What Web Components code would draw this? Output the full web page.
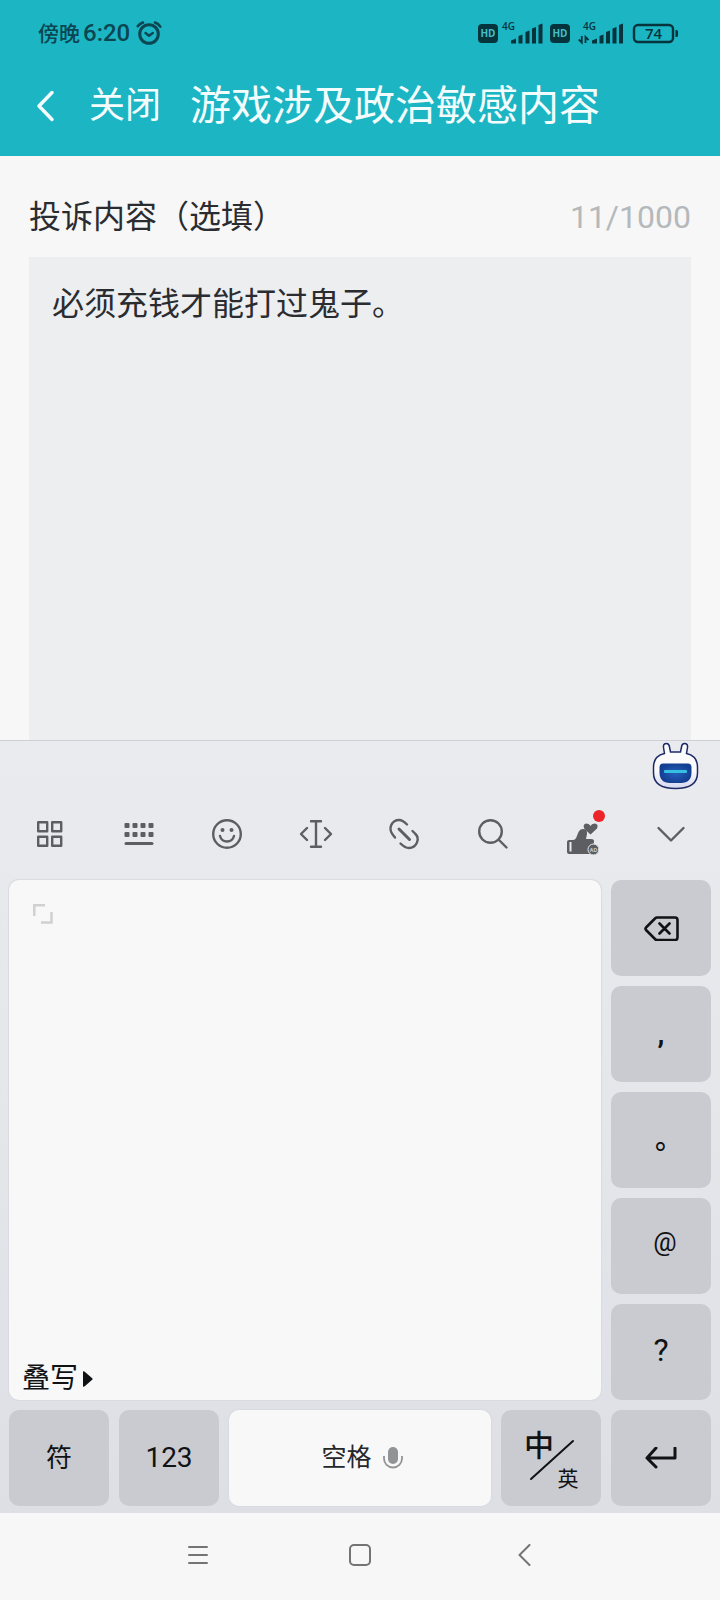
<!DOCTYPE html>
<html lang="zh-CN">
<head>
<meta charset="utf-8">
<meta name="viewport" content="width=device-width, initial-scale=1">
<title>游戏涉及政治敏感内容</title>
<style>
  body { margin: 0; background: #f7f7f7; font-family: Roboto, "Noto Sans CJK SC", sans-serif; }
</style>
</head>
<body>
<complaint-page></complaint-page>

<script>
const RESET = `
  * { box-sizing: border-box; }
  button { appearance: none; border: 0; margin: 0; padding: 0; background: none; color: inherit; font: inherit; cursor: pointer; }
  svg { display: block; flex: none; }
`;

function define(name, html, connected) {
  const template = document.createElement('template');
  template.innerHTML = html;
  customElements.define(name, class extends HTMLElement {
    constructor() {
      super();
      this.attachShadow({ mode: 'open' }).append(template.content.cloneNode(true));
    }
    connectedCallback() { if (connected) connected.call(this, this.shadowRoot); }
  });
}

define('status-bar', `
  <style>${RESET}
    :host { display: flex; align-items: center; justify-content: space-between; height: 66px; padding: 0 41px 0 38px; color: #0b4652; }
    .side { display: flex; align-items: center; }
    .time { font-size: 21px; line-height: 32px; font-weight: 500; }
    .time b { font-size: 24px; font-weight: 500; margin-left: 3px; }
    .alarm { margin-left: 6px; }
    text { font-family: "Open Sans", sans-serif; }
  </style>
  <div class="side">
    <span class="time">傍晚<b>6:20</b></span>
    <svg class="alarm" width="26" height="24" viewBox="0 0 26 24" fill="none" stroke="currentColor" stroke-width="3" stroke-linecap="round" stroke-linejoin="round">
      <circle cx="13" cy="13" r="9.3"/><path d="M9.5 12l3.5 2.7 3.8-2.7" stroke-width="2.4"/><path d="M1.8 5.2Q4 2.6 7 1.6M19 1.6Q22.5 2.8 24.3 5.6" stroke-width="2.6"/>
    </svg>
  </div>
  <svg width="201" height="32" viewBox="0 -4 201 32" fill="#06343d">
    <rect x="0" y="3" width="20" height="19" rx="4"/>
    <text x="10" y="16" font-size="10" font-weight="700" text-anchor="middle" fill="#43bfca">HD</text>
    <text x="24" y="9" font-size="10" font-weight="600">4G</text>
    <path d="M33 19.500l5-2V22.500h-5zM40.500 15l4-1.500v9h-4zM47.500 11l4-1.500v13h-4zM54 7.500l4-1.500v16.500h-4zM60.500 4l4-1.500v20h-4z"/>
    <rect x="72" y="3" width="20" height="19" rx="4"/>
    <text x="82" y="16" font-size="10" font-weight="700" text-anchor="middle" fill="#43bfca">HD</text>
    <text x="105" y="9" font-size="10" font-weight="600">4G</text>
    <path d="M103.800 15v6.500l-3-3M107.500 22v-6l3 3" fill="none" stroke="#06343d" stroke-width="1.800"/>
    <path d="M114 19.500l5-2V22.500h-5zM121.500 15l4-1.500v9h-4zM128 11l4-1.500v13h-4zM134.500 7.500l4-1.500v16.500h-4zM141 4l4-1.500v20h-4z"/>
    <rect x="156" y="4" width="39" height="17" rx="4" fill="none" stroke="#06343d" stroke-width="2.400"/>
    <path d="M197.500 9h1q1.500 0 1.500 1.500v4q0 1.500-1.500 1.500h-1z"/>
    <text x="175.500" y="18" font-size="15" font-weight="600" text-anchor="middle">74</text>
  </svg>
`);

define('title-bar', `
  <style>${RESET}
    :host { display: flex; align-items: center; height: 90px; padding: 0 36px 10px; color: #f4fdfd; }
    .close { margin-left: 34px; font-size: 36px; line-height: 48px; }
    h1 { margin: 0 0 0 29px; font-size: 41px; line-height: 56px; font-weight: 400; white-space: nowrap; }
  </style>
  <button type="button" aria-label="返回">
    <svg width="19" height="32" viewBox="0 0 19 32" fill="none" stroke="currentColor" stroke-width="3.5" stroke-linecap="round" stroke-linejoin="round"><path d="M16 2.500L3 16l13 13.500"/></svg>
  </button>
  <button class="close" type="button">关闭</button>
  <h1><slot></slot></h1>
`);

define('complaint-form', `
  <style>${RESET}
    :host { display: flex; flex-direction: column; padding: 37px 29px 0; }
    .head { display: flex; justify-content: space-between; align-items: center; height: 48px; font-size: 32px; line-height: 48px; color: #2b2c30; }
    output { color: #b5b9bb; }
    textarea { flex: 1; display: block; width: 100%; min-height: 160px; margin: 16px 0 0; padding: 23px; border: 0; outline: 0; resize: none; background: #eceef0; color: #2b2c30; font: inherit; font-size: 32px; line-height: 48px; }
  </style>
  <div class="head">
    <label for="content">投诉内容（选填）</label>
    <output for="content">11/1000</output>
  </div>
  <textarea id="content" maxlength="1000">必须充钱才能打过鬼子。</textarea>
`, function (root) {
  const area = root.querySelector('textarea');
  area.addEventListener('input', () => {
    root.querySelector('output').textContent = area.value.length + '/1000';
  });
});

define('ime-toolbar', `
  <style>${RESET}
    :host { display: block; color: #5d5e62; }
    .assist { display: flex; justify-content: flex-end; height: 49px; padding: 1px 21px 0; }
    .tools { display: grid; grid-template-columns: repeat(8, 1fr); height: 88px; padding: 0 5px; }
    .tools button { display: grid; place-items: center; }
    .tools svg { overflow: visible; fill: none; stroke: currentColor; stroke-width: 2.4px; stroke-linecap: round; stroke-linejoin: round; }
  </style>
  <div class="assist">
    <button type="button" aria-label="智能助手">
      <svg width="47" height="48" viewBox="0 0 47 48">
        <defs>
          <radialGradient id="face"><stop offset="0" stop-color="#2460bd"/><stop offset="1" stop-color="#143f91"/></radialGradient>
          <linearGradient id="shell" x2="0" y2="1"><stop offset=".6" stop-color="#fbfbfe"/><stop offset="1" stop-color="#d4d7ee"/></linearGradient>
        </defs>
        <path d="M12.500 11.500L11.500 5.500Q11 1.500 14.500 1.500Q17 1.500 17.500 5L18.500 10H28.500L29.500 5Q30 1.500 32.500 1.500Q36 1.500 35.500 5.500L34.500 11.500Q45.500 14 45.500 25V31Q45.500 46.500 23.500 46.500Q1.500 46.500 1.500 31V25Q1.500 14 12.500 11.500Z" fill="url(#shell)" stroke="#1c2a66" stroke-width="1.500"/>
        <path d="M11 21.500H36Q39.500 21.500 39.500 25.500V30Q39.500 41 29 41H18Q7.500 41 7.500 30V25.500Q7.500 21.500 11 21.500Z" fill="url(#face)"/>
        <rect x="12" y="28" width="23" height="3" rx="1" fill="#35bfe0"/>
      </svg>
    </button>
  </div>
  <div class="tools" role="toolbar" aria-label="输入法工具">
    <button type="button" aria-label="功能"><svg width="26" height="26" viewBox="-1 0 26 26"><path d="M1.200 1.200h9v9h-9zM15.200 1.200h9v9h-9zM1.200 15.800h9v9h-9zM15.200 15.800h9v9h-9z"/></svg></button>
    <button type="button" aria-label="键盘"><svg width="30" height="24" viewBox="-1 0 30 24"><g fill="currentColor" stroke="none"><path d="M.5 2q0-1 1-1h3q1 0 1 1v3q0 1-1 1h-3q-1 0-1-1zM8.500 2q0-1 1-1h3q1 0 1 1v3q0 1-1 1h-3q-1 0-1-1zM16.500 2q0-1 1-1h3q1 0 1 1v3q0 1-1 1h-3q-1 0-1-1zM24.500 2q0-1 1-1h3q1 0 1 1v3q0 1-1 1h-3q-1 0-1-1z"/><path d="M.5 11q0-1 1-1h3q1 0 1 1v3q0 1-1 1h-3q-1 0-1-1zM8.500 11q0-1 1-1h3q1 0 1 1v3q0 1-1 1h-3q-1 0-1-1zM16.500 11q0-1 1-1h3q1 0 1 1v3q0 1-1 1h-3q-1 0-1-1zM24.500 11q0-1 1-1h3q1 0 1 1v3q0 1-1 1h-3q-1 0-1-1z"/></g><path d="M2 21.500h26" stroke-width="3"/></svg></button>
    <button type="button" aria-label="表情"><svg width="30" height="30" viewBox="0 0 30 30"><circle cx="15" cy="15" r="13.800"/><path d="M8 17q1.500 5.500 7 5.500t7-5.500"/><g fill="currentColor" stroke="none"><circle cx="10.500" cy="11" r="2"/><circle cx="19.500" cy="11" r="2"/></g></svg></button>
    <button type="button" aria-label="光标移动"><svg width="32" height="28" viewBox="0 0 32 28"><path d="M11 1.200h10M16 1.200v25.600M11 26.800h10M7 8l-6 6 6 6M25 8l6 6-6 6"/></svg></button>
    <button type="button" aria-label="链接"><svg width="30" height="30" viewBox="0 0 30 30"><path d="M6 18.500L4 16C-1.500 9 3 1 10.200 1Q13.500 1 18 5.500M11.500 24.500Q16 29 20 29C27 29 32 20 26 14.500L23.500 12"/><path d="M10 10l10.500 10.500" stroke-width="3"/></svg></button>
    <button type="button" aria-label="搜索"><svg width="30" height="30" viewBox="0 0 30 30"><circle cx="12.500" cy="12.500" r="11.300"/><path d="M20.500 20.500l8 8"/></svg></button>
    <button type="button" aria-label="推荐"><svg width="38" height="46" viewBox="-4 0 38 46">
      <g stroke="none" fill="currentColor">
        <path d="M2 29h4q2.500 0 3.500-3l2-5q1.500-3 4.500-3 4.500 0 4 5l-1 5h5q3.500 0 3 3l-1 4-3 8H2q-2 0-2-2V31q0-2 2-2z"/>
        <path d="M23.500 23.500l-6-5.500q-2.500-5 2-5.500 3 0 4 2.500 1-2.500 4-2.500 4.500.5 2.500 5z"/>
        <circle cx="26.500" cy="38.500" r="5.500" stroke="#e9eaed" stroke-width="1"/>
        <path d="M2.500 31h2v9.500h-2z" fill="#e9eaed"/>
        <circle cx="32" cy="5" r="6" fill="#ed2429"/>
        <text x="26.500" y="41" font-size="6" font-weight="700" text-anchor="middle" fill="#c4c5c8">AD</text>
      </g>
    </svg></button>
    <button type="button" aria-label="收起键盘"><svg width="28" height="16" viewBox="0 1 28 16"><path d="M1.500 3L14 15.500 26.500 3"/></svg></button>
  </div>
`);

define('ime-key', `
  <style>${RESET}
    :host { display: block; color: #111214; }
    button { display: flex; align-items: center; justify-content: center; gap: 11px; width: 100%; height: 100%; border-radius: 10px; background: #c9cbd0; font-size: 26px; line-height: 36px; }
    :host([tone="light"]) button { background: #f8f8f8; box-shadow: 0 0 1px 1px #d9dbe1; color: #26272a; padding-left: 4px; font-size: 25px; }
    :host([size="large"]) button { font-size: 28px; }
  </style>
  <button type="button"><slot></slot></button>
`, function (root) {
  const label = this.getAttribute('label');
  if (label) root.querySelector('button').setAttribute('aria-label', label);
});

define('writing-pad', `
  <style>${RESET}
    :host { display: flex; flex-direction: column; justify-content: space-between; align-items: flex-start; padding: 24px 13px 1px; border-radius: 10px; background: #f8f8f8; box-shadow: 0 0 1px 1px #d9dbe1; color: #111214; }
    .expand { margin-left: 11px; }
    .mode { display: flex; align-items: center; gap: 5px; font-size: 28px; line-height: 40px; }
  </style>
  <button class="expand" type="button" aria-label="展开手写区">
    <svg width="20" height="20" viewBox="0 0 20 20" fill="none" stroke="#cfd0d1" stroke-width="2.500"><path d="M1.300 12V1.300H12M8 18.500h10.500V8"/></svg>
  </button>
  <button class="mode" type="button">叠写
    <svg width="10" height="16" viewBox="0 0 10 16"><path d="M0 .5Q1 0 2 1L9.500 7.500v1L2 15Q1 16 0 15.500z" fill="currentColor"/></svg>
  </button>
`);

define('ime-keyboard', `
  <style>${RESET}
    :host { display: block; border-top: 1px solid #ced0d5; background: linear-gradient(#eaebee, #e5e6ea 50%, #dedfe5); }
    .keys { display: grid; grid-template-columns: 100fr 100fr 262fr 100fr 100fr; grid-auto-rows: 96px; gap: 10px; padding: 2px 9px 7px; }
    writing-pad { grid-area: 1 / 1 / 6 / 5; }
    .side { grid-column: 5; }
    .stop { padding-left: 16px; font-size: 28px; font-weight: 500; }
    .comma { font-weight: 700; }
    .at { display: block; padding: 0 0 8px 8px; }
    .ask { display: block; font-size: 32px; padding-bottom: 4px; }
  </style>
  <ime-toolbar></ime-toolbar>
  <div class="keys">
    <writing-pad></writing-pad>
    <ime-key class="side" label="删除"><svg width="35" height="26" viewBox="0 -1 35 26" fill="none" stroke="currentColor" stroke-width="2.600" stroke-linecap="round" stroke-linejoin="round"><path d="M13 1.500h18q2.500 0 2.500 2.500v17.500q0 2.500-2.500 2.500H13q-1 0-2-1L2 14q-1-1.200 0-2.500L11 2.500q1-1 2-1zM15.500 7.500l10 10M25.500 7.500l-10 10"/></svg></ime-key>
    <ime-key class="side" size="large"><span class="comma">,</span></ime-key>
    <ime-key class="side"><span class="stop">。</span></ime-key>
    <ime-key class="side"><span class="at">@</span></ime-key>
    <ime-key class="side"><span class="ask">?</span></ime-key>
    <ime-key>符</ime-key>
    <ime-key size="large"><span>123</span></ime-key>
    <ime-key tone="light">空格<svg width="20" height="22" viewBox="0 0 20 22" fill="none" stroke="#929395" stroke-width="1.800"><rect x="5" y="0" width="10" height="17" rx="5" fill="#929395" stroke="none"/><path d="M1 9v2.500a9 9 0 0 0 18 0V9"/></svg></ime-key>
    <ime-key label="中英切换"><svg width="100" height="96" viewBox="0 0 100 96" fill="currentColor"><text x="38" y="46" font-size="30" font-weight="500" text-anchor="middle">中</text><path d="M30 69L72 31" stroke="currentColor" stroke-width="2" stroke-linecap="round"/><text x="67" y="76" font-size="21" text-anchor="middle">英</text></svg></ime-key>
    <ime-key label="换行"><svg width="32" height="22" viewBox="0 1 32 22" fill="none" stroke="currentColor" stroke-width="3" stroke-linecap="round" stroke-linejoin="round"><path d="M30 2v10H2M11 2L2 12l9 9"/></svg></ime-key>
  </div>
`);

define('system-nav', `
  <style>${RESET}
    :host { display: flex; justify-content: center; height: 87px; padding-bottom: 4px; color: #737476; background: #f7f7f7; }
    button { display: grid; place-items: center; width: 162px; }
    svg { fill: none; stroke: currentColor; stroke-width: 2px; stroke-linecap: round; stroke-linejoin: round; }
  </style>
  <button type="button" aria-label="最近任务"><svg width="22" height="22" viewBox="0 0 22 22"><path d="M2 3h18M2 11h18M2 19h18"/></svg></button>
  <button type="button" aria-label="主屏幕"><svg width="22" height="22" viewBox="0 0 22 22"><rect x="1" y="1" width="20" height="20" rx="4"/></svg></button>
  <button type="button" aria-label="返回"><svg width="22" height="22" viewBox="0 0 22 22"><path d="M18.500 1L8.500 11l10 10"/></svg></button>
`);

define('complaint-page', `
  <style>${RESET}
    :host { display: flex; flex-direction: column; min-height: 100vh; }
    header { background: #1cb5c4; }
    complaint-form { flex: 1; }
  </style>
  <header>
    <status-bar></status-bar>
    <title-bar>游戏涉及政治敏感内容</title-bar>
  </header>
  <complaint-form></complaint-form>
  <ime-keyboard></ime-keyboard>
  <system-nav></system-nav>
`);
</script>
</body>
</html>
